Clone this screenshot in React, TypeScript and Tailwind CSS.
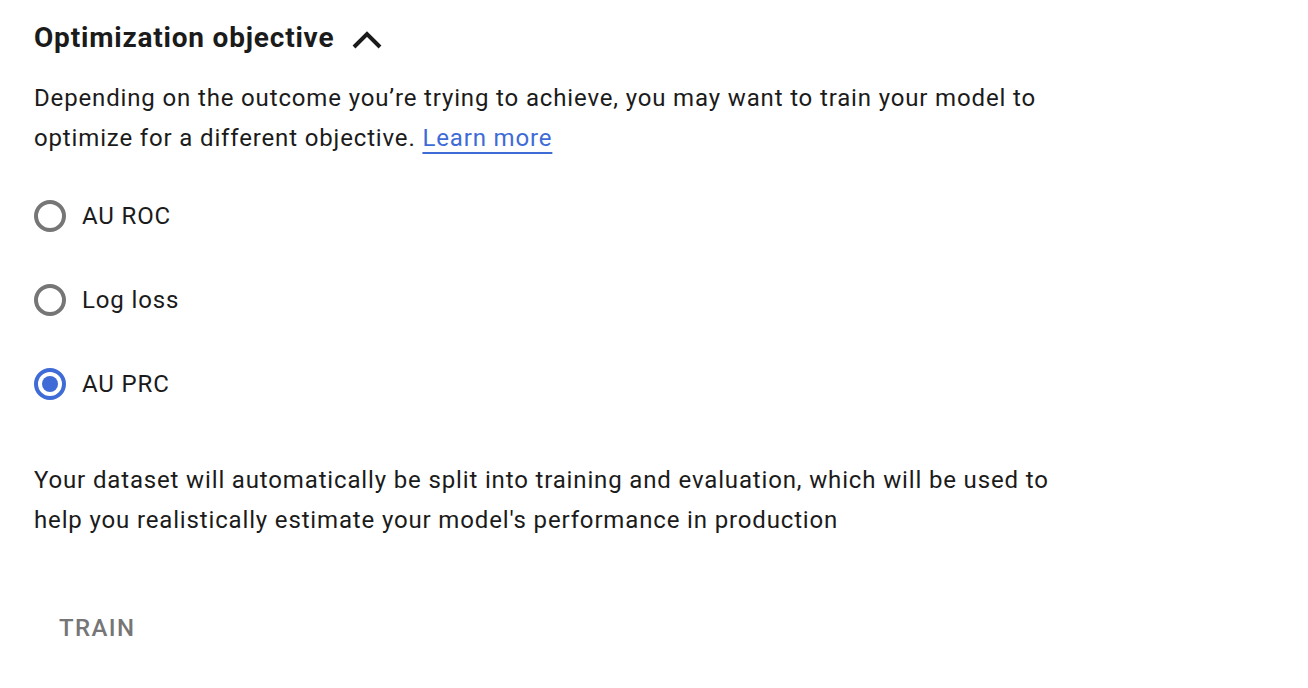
import React, { useState } from 'react';

const OPTIONS = ['AU ROC', 'Log loss', 'AU PRC'];

function Radio({ checked }: { checked: boolean }) {
  return (
    <span
      className={`flex h-[32px] w-[32px] items-center justify-center rounded-full border-[4px] ${checked ? 'border-[#3e6bd6]' : 'border-[#767676]'}`}
    >
      {checked && <span className="h-[16px] w-[16px] rounded-full bg-[#3e6bd6]" />}
    </span>
  );
}

export default function App() {
  const [objective, setObjective] = useState('AU PRC');

  return (
    <div className="min-h-[688px] w-[1308px] bg-white pl-[34px] pt-[18px] text-[#1b1b1b] font-['Roboto',sans-serif]">
      {/* Header */}
      <div className="flex items-center gap-[18px]">
        <h2 className="text-[28px] font-bold leading-[40px] tracking-[0.8px]">Optimization objective</h2>
        <svg width="30" height="18" viewBox="0 0 30 18" className="mt-[3px]">
          <path d="M2 16 L15 3 L28 16" fill="none" stroke="#1b1b1b" strokeWidth="4" />
        </svg>
      </div>

      <p className="mt-[20px] max-w-[1030px] text-[24px] leading-[40px] tracking-[0.85px]">
        Depending on the outcome you’re trying to achieve, you may want to train your model to
        optimize for a different objective.{' '}
        <a href="#" className="text-[#3e6bd6] underline decoration-[2px] underline-offset-[6px]">Learn more</a>
      </p>

      {/* Options */}
      <div className="mt-[16px] flex flex-col">
        {OPTIONS.map(o => (
          <label
            key={o}
            onClick={() => setObjective(o)}
            className="flex h-[84px] cursor-pointer items-center gap-[16px]"
          >
            <Radio checked={objective === o} />
            <span className="text-[24px] tracking-[0.85px]">{o}</span>
          </label>
        ))}
      </div>

      <p className="mt-[34px] max-w-[1030px] text-[24px] leading-[40px] tracking-[0.85px]">
        Your dataset will automatically be split into training and evaluation, which will be used to
        help you realistically estimate your model's performance in production
      </p>

      <button className="mt-[70px] px-[25px] text-[24px] font-medium tracking-[1.4px] text-[#767676]">
        TRAIN
      </button>
    </div>
  );
}
